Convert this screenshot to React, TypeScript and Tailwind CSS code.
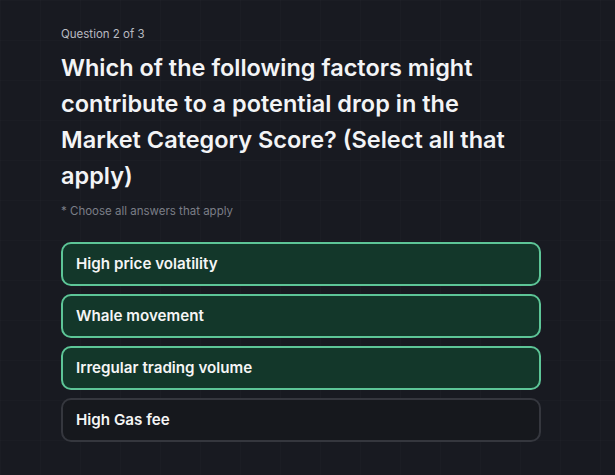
import { useState } from "react";

const options = [
  "High price volatility",
  "Whale movement",
  "Irregular trading volume",
  "High Gas fee",
];

export default function App() {
  const [selected, setSelected] = useState<string[]>([
    "High price volatility",
    "Whale movement",
    "Irregular trading volume",
  ]);

  const toggle = (o: string) =>
    setSelected((s) => (s.includes(o) ? s.filter((x) => x !== o) : [...s, o]));

  return (
    <div className="min-h-[475px] w-full bg-[#181a21] bg-[linear-gradient(rgba(255,255,255,0.012)_1px,transparent_1px),linear-gradient(90deg,rgba(255,255,255,0.012)_1px,transparent_1px)] bg-[size:40px_40px] font-['Inter','Liberation_Sans',sans-serif]">
      <div className="w-[541px] pl-[61px] pt-[26px]">
        <p className="text-[11.5px] leading-[16px] text-[#b8bac1]">Question 2 of 3</p>
        <h1 className="mt-[8px] text-[23.5px] font-semibold leading-[36px] text-[#f3f4f6]">
          Which of the following factors might contribute to a potential drop in the
          Market Category Score? (Select all that apply)
        </h1>
        <p className="mt-[9px] text-[11.5px] leading-[16px] text-[#7b7e87]">
          * Choose all answers that apply
        </p>

        <div className="mt-[23px] flex flex-col gap-[8px]">
          {options.map((o) => {
            const on = selected.includes(o);
            return (
              <button
                key={o}
                onClick={() => toggle(o)}
                className={`flex h-[44px] items-center rounded-[10px] border-2 px-[13px] text-left text-[15.2px] font-semibold text-[#f5f5f5] ${
                  on ? "border-[#5dc597] bg-[#13372a]" : "border-[#35373e] bg-[#16181d]"
                }`}
              >
                {o}
              </button>
            );
          })}
        </div>
      </div>
    </div>
  );
}
